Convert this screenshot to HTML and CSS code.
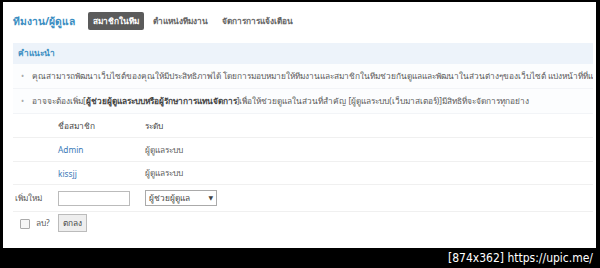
FILE: index.html
```html
<!DOCTYPE html>
<html lang="th">
<head>
    <meta charset="UTF-8">
    <title>ทีมงาน/ผู้ดูแล</title>
    <link rel="stylesheet" href="styles.css">
</head>
<body>
    <div class="frame">
        <div class="header">
            <h1>ทีมงาน/ผู้ดูแล</h1>
            <span class="tab active">สมาชิกในทีม</span>
            <span class="tab">ตำแหน่งทีมงาน</span>
            <span class="tab">จัดการการแจ้งเตือน</span>
        </div>

        <div class="info">
            <div class="info-title">คำแนะนำ</div>
            <ul>
                <li>คุณสามารถพัฒนาเว็บไซต์ของคุณให้มีประสิทธิภาพได้ โดยการมอบหมายให้ทีมงานและสมาชิกในทีมช่วยกันดูแลและพัฒนาในส่วนต่างๆของเว็บไซต์ แบ่งหน้าที่ที่แตกต่างกันให้</li>
                <li>อาจจะต้องเพิ่ม[<b>ผู้ช่วยผู้ดูแลระบบหรือผู้รักษาการแทนจัดการ</b>]เพื่อให้ช่วยดูแลในส่วนที่สำคัญ [ผู้ดูแลระบบ(เว็บมาสเตอร์)]มีสิทธิที่จะจัดการทุกอย่าง</li>
            </ul>
        </div>

        <table class="members">
            <tr class="head">
                <td class="c1"></td>
                <td class="c2">ชื่อสมาชิก</td>
                <td>ระดับ</td>
            </tr>
            <tr class="r1">
                <td class="c1"></td>
                <td class="c2"><a href="#">Admin</a></td>
                <td>ผู้ดูแลระบบ</td>
            </tr>
            <tr>
                <td class="c1"></td>
                <td class="c2"><a href="#">kissjj</a></td>
                <td>ผู้ดูแลระบบ</td>
            </tr>
            <tr class="add">
                <td class="c1">เพิ่มใหม่</td>
                <td class="c2"><input type="text" class="field"></td>
                <td><span class="select">ผู้ช่วยผู้ดูแล<span class="arrow">▼</span></span></td>
            </tr>
            <tr class="last">
                <td class="c1"><span class="check"></span>ลบ?</td>
                <td class="c2"><span class="btn">ตกลง</span></td>
                <td></td>
            </tr>
        </table>
    </div>
    <div class="stamp">[874x362] https://upic.me/</div>
</body>
</html>
```

FILE: styles.css
```css
body {
    margin: 0;
    background-color: #000;
    font-family: Tahoma, "Noto Sans", "DejaVu Sans", sans-serif;
    font-size: 8.3px;
    color: #5a5a5a;
}

.frame {
    margin: 2px 4px 0 3px;
    height: 246px;
    background-color: #fff;
    overflow: hidden;
}

.header {
    display: flex;
    align-items: center;
    padding: 8px 0 0 10px;
    height: 22px;
}

.header h1 {
    margin: 0 13px 0 0;
    font-size: 10.3px;
    font-weight: bold;
    color: #3b8ec2;
}

.tab {
    padding: 2px 5px;
    margin-right: 4px;
    color: #666;
    font-weight: bold;
}

.tab.active {
    background-color: #5b5b5b;
    color: #fff;
    border-radius: 2px;
}

.info {
    margin: 11px 3px 0 10px;
}

.info-title {
    background-color: #edf3fa;
    color: #3b8ec2;
    font-weight: bold;
    height: 21px;
    line-height: 19px;
    padding-left: 5px;
}

.info ul {
    margin: 0;
    padding: 0;
    list-style: none;
    background-color: #fcfdfe;
}

.info li {
    height: 24px;
    line-height: 24px;
    padding-left: 19px;
    white-space: nowrap;
    overflow: hidden;
    position: relative;
    border-bottom: 1px solid #f2f4f7;
}

.info li::before {
    content: "•";
    position: absolute;
    left: 8px;
    color: #aaa;
}

.info li b {
    color: #444;
}

.members {
    margin: 1px 3px 0 10px;
    width: calc(100% - 13px);
    border-collapse: collapse;
}

.members td {
    height: 22px;
    padding: 0;
    border-bottom: 1px solid #f0f0f0;
    vertical-align: middle;
}

.members tr.r1 td {
    height: 23px;
}

.members tr.add td {
    height: 26px;
}

.members tr.last td {
    border-bottom: none;
    height: 22px;
}

.members .head td {
    color: #444;
}

.c1 {
    width: 43px;
    padding-left: 2px !important;
}

.c2 {
    width: 87px;
}

.members a {
    color: #3b7ab8;
    text-decoration: none;
}

.field {
    width: 70px;
    height: 13px;
    padding: 0;
    border: 1px solid #bbb;
    box-sizing: content-box;
    display: block;
}

.select {
    display: inline-flex;
    justify-content: space-between;
    align-items: center;
    width: 64px;
    height: 14px;
    padding: 0 3px;
    border: 1px solid #aaa;
    color: #444;
}

.arrow {
    font-size: 6px;
}

.check {
    display: inline-block;
    width: 8px;
    height: 8px;
    border: 1px solid #aaa;
    border-radius: 1px;
    margin: 0 6px 0 5px;
    vertical-align: middle;
    background-color: #f6f6f6;
}

.btn {
    display: inline-block;
    padding: 1px 4px;
    border: 1px solid #bbb;
    background-color: #eee;
    color: #444;
}

.stamp {
    height: 20px;
    line-height: 20px;
    text-align: right;
    padding-right: 7px;
    color: #fff;
    font-family: "DejaVu Sans Condensed", "DejaVu Sans", sans-serif;
    font-size: 12px;
}
```
